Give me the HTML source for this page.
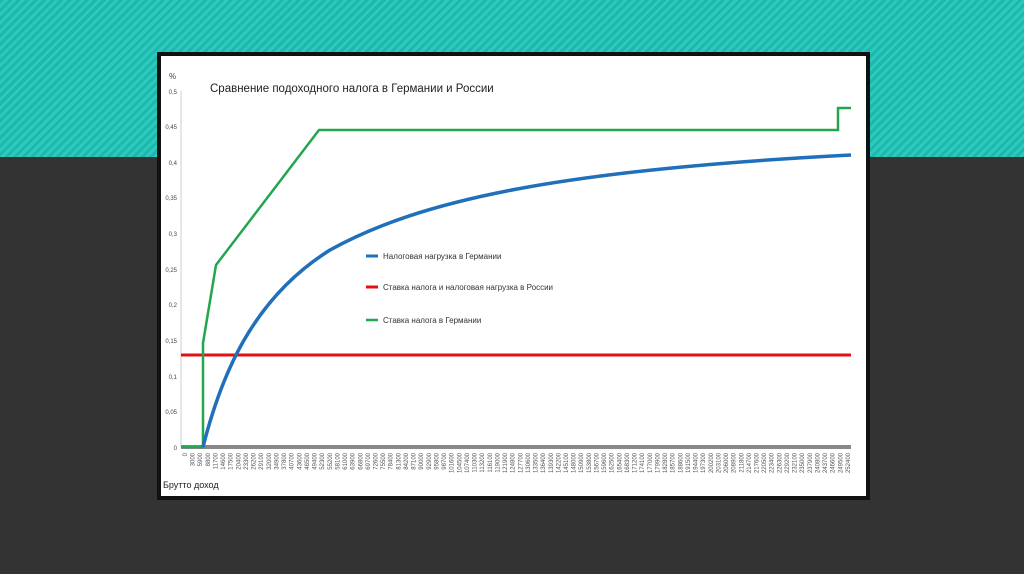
<!DOCTYPE html>
<html><head><meta charset="utf-8"><style>
body{margin:0;width:1024px;height:574px;overflow:hidden;background:#333;font-family:"Liberation Sans",sans-serif}
.teal{position:absolute;left:0;top:0;width:1024px;height:157px;background:repeating-linear-gradient(135deg,#1db8ad 0 3px,#2ec9bd 3px 6px)}
.panel{position:absolute;left:157px;top:52px;width:705px;height:440px;background:#fff;border:4px solid #111}
svg{position:absolute;left:0;top:0}
</style></head><body>
<div class="teal"></div>
<div class="panel"></div>
<svg width="1024" height="574" font-family="Liberation Sans, sans-serif">
<text x="210" y="92" font-size="11.5" fill="#222">Сравнение подоходного налога в Германии и России</text>
<text x="169" y="79" font-size="8" fill="#444">%</text>
<g font-size="6" fill="#444" text-anchor="end">
<text x="177" y="94">0,5</text><text x="177" y="129">0,45</text><text x="177" y="165">0,4</text><text x="177" y="200">0,35</text><text x="177" y="236">0,3</text><text x="177" y="272">0,25</text><text x="177" y="307">0,2</text><text x="177" y="343">0,15</text><text x="177" y="379">0,1</text><text x="177" y="414">0,05</text><text x="177" y="450">0</text>
</g>
<line x1="181" y1="91" x2="181" y2="447" stroke="#ccc" stroke-width="1"/>
<line x1="181" y1="447" x2="851" y2="447" stroke="#888" stroke-width="4"/>
<line x1="181" y1="355" x2="851" y2="355" stroke="#e41010" stroke-width="3"/>
<path d="M181,447 L203,447 L203,343 L216,265 L319,130 L838,130 L838,108 L851,108" fill="none" stroke="#22a650" stroke-width="2.5"/>
<path d="M203,447 C220,380 250,300 330,250 C420,200 560,170 851,155" fill="none" stroke="#1f6fba" stroke-width="3.5"/>
<line x1="366" y1="256" x2="378" y2="256" stroke="#1f6fba" stroke-width="3"/>
<line x1="366" y1="287" x2="378" y2="287" stroke="#e41010" stroke-width="3"/>
<line x1="366" y1="320" x2="378" y2="320" stroke="#22a650" stroke-width="2.5"/>
<g font-size="8" fill="#333">
<text x="383" y="259">Налоговая нагрузка в Германии</text>
<text x="383" y="290">Ставка налога и налоговая нагрузка в России</text>
<text x="383" y="323">Ставка налога в Германии</text>
</g>
<g font-size="6" fill="#555" id="xl">
<text transform="translate(187,453) rotate(-90)" text-anchor="end">0</text>
</g>
<text x="163" y="488" font-size="9" fill="#222">Брутто доход</text>
</svg>
<script>
var g=document.getElementById('xl');
for(var k=1;k<=87;k++){var x=185+k*7.62+2;var t=document.createElementNS('http://www.w3.org/2000/svg','text');t.setAttribute('transform','translate('+x+',453) rotate(-90)');t.setAttribute('text-anchor','end');t.textContent=String(2900*k+100);g.appendChild(t);}
</script>
</body></html>
